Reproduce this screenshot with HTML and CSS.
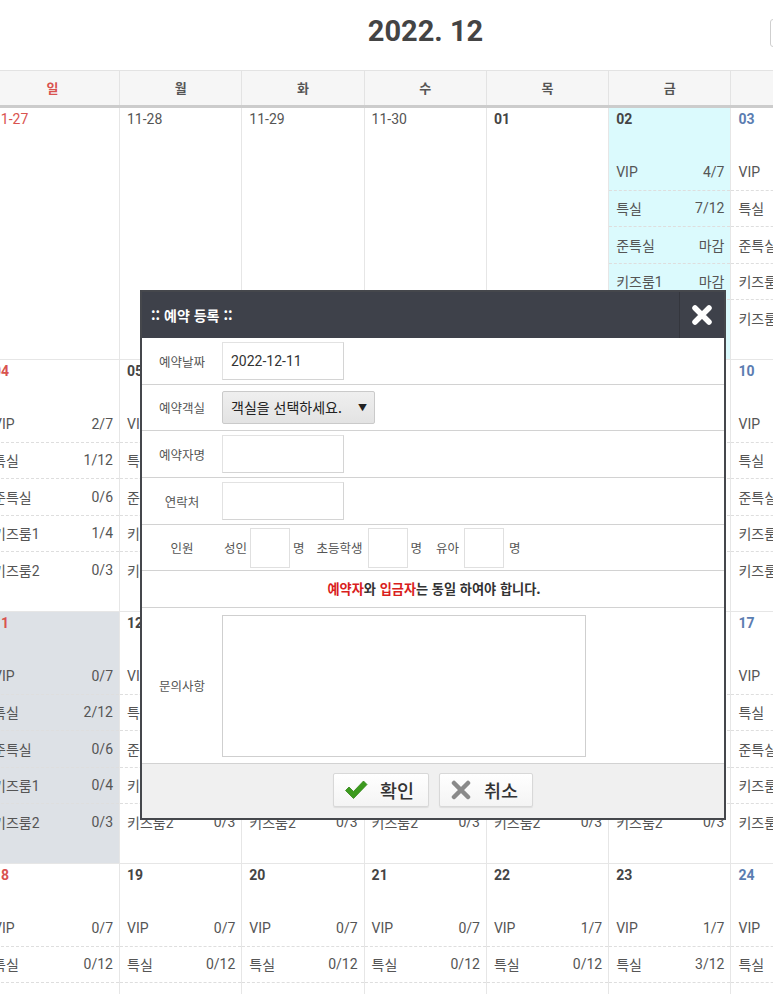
FILE: index.html
```html
<!DOCTYPE html>
<html lang="ko">
<head>
<meta charset="utf-8">
<title>2022. 12 예약</title>
<link rel="stylesheet" href="styles.css">
</head>
<body>
<div class="wrap">
  <div class="top">
    <div></div>
    <h1 class="title">2022. 12</h1>
    <div class="tools"><span class="tool-btn"></span></div>
  </div>
  <div class="week-head">
    <div class="wd sun">일</div><div class="wd">월</div><div class="wd">화</div><div class="wd">수</div><div class="wd">목</div><div class="wd">금</div><div class="wd"></div>
  </div>
  <div class="grid">
    <!-- week 1 -->
    <div class="cell sun"><div class="date prev">11-27</div></div>
    <div class="cell"><div class="date prev">11-28</div></div>
    <div class="cell"><div class="date prev">11-29</div></div>
    <div class="cell"><div class="date prev">11-30</div></div>
    <div class="cell"><div class="date">01</div></div>
    <div class="cell today"><div class="date">02</div>
      <ul class="rooms"><li><span>VIP</span><span>4/7</span></li><li><span>특실</span><span>7/12</span></li><li><span>준특실</span><span>마감</span></li><li><span>키즈룸1</span><span>마감</span></li><li><span>키즈룸2</span><span>마감</span></li></ul></div>
    <div class="cell sat"><div class="date">03</div>
      <ul class="rooms"><li><span>VIP</span><span>5/7</span></li><li><span>특실</span><span>9/12</span></li><li><span>준특실</span><span>마감</span></li><li><span>키즈룸1</span><span>마감</span></li><li><span>키즈룸2</span><span>마감</span></li></ul></div>
    <!-- week 2 -->
    <div class="cell sun"><div class="date">04</div>
      <ul class="rooms"><li><span>VIP</span><span>2/7</span></li><li><span>특실</span><span>1/12</span></li><li><span>준특실</span><span>0/6</span></li><li><span>키즈룸1</span><span>1/4</span></li><li><span>키즈룸2</span><span>0/3</span></li></ul></div>
    <div class="cell"><div class="date">05</div>
      <ul class="rooms"><li><span>VIP</span><span>0/7</span></li><li><span>특실</span><span>0/12</span></li><li><span>준특실</span><span>0/6</span></li><li><span>키즈룸1</span><span>0/4</span></li><li><span>키즈룸2</span><span>0/3</span></li></ul></div>
    <div class="cell"><div class="date">06</div>
      <ul class="rooms"><li><span>VIP</span><span>0/7</span></li><li><span>특실</span><span>0/12</span></li><li><span>준특실</span><span>0/6</span></li><li><span>키즈룸1</span><span>0/4</span></li><li><span>키즈룸2</span><span>0/3</span></li></ul></div>
    <div class="cell"><div class="date">07</div>
      <ul class="rooms"><li><span>VIP</span><span>0/7</span></li><li><span>특실</span><span>0/12</span></li><li><span>준특실</span><span>0/6</span></li><li><span>키즈룸1</span><span>0/4</span></li><li><span>키즈룸2</span><span>0/3</span></li></ul></div>
    <div class="cell"><div class="date">08</div>
      <ul class="rooms"><li><span>VIP</span><span>0/7</span></li><li><span>특실</span><span>0/12</span></li><li><span>준특실</span><span>0/6</span></li><li><span>키즈룸1</span><span>0/4</span></li><li><span>키즈룸2</span><span>0/3</span></li></ul></div>
    <div class="cell"><div class="date">09</div>
      <ul class="rooms"><li><span>VIP</span><span>1/7</span></li><li><span>특실</span><span>2/12</span></li><li><span>준특실</span><span>0/6</span></li><li><span>키즈룸1</span><span>0/4</span></li><li><span>키즈룸2</span><span>0/3</span></li></ul></div>
    <div class="cell sat"><div class="date">10</div>
      <ul class="rooms"><li><span>VIP</span><span>2/7</span></li><li><span>특실</span><span>3/12</span></li><li><span>준특실</span><span>1/6</span></li><li><span>키즈룸1</span><span>1/4</span></li><li><span>키즈룸2</span><span>1/3</span></li></ul></div>
    <!-- week 3 -->
    <div class="cell sun sel"><div class="date">11</div>
      <ul class="rooms"><li><span>VIP</span><span>0/7</span></li><li><span>특실</span><span>2/12</span></li><li><span>준특실</span><span>0/6</span></li><li><span>키즈룸1</span><span>0/4</span></li><li><span>키즈룸2</span><span>0/3</span></li></ul></div>
    <div class="cell"><div class="date">12</div>
      <ul class="rooms"><li><span>VIP</span><span>0/7</span></li><li><span>특실</span><span>0/12</span></li><li><span>준특실</span><span>0/6</span></li><li><span>키즈룸1</span><span>0/4</span></li><li><span>키즈룸2</span><span>0/3</span></li></ul></div>
    <div class="cell"><div class="date">13</div>
      <ul class="rooms"><li><span>VIP</span><span>0/7</span></li><li><span>특실</span><span>0/12</span></li><li><span>준특실</span><span>0/6</span></li><li><span>키즈룸1</span><span>0/4</span></li><li><span>키즈룸2</span><span>0/3</span></li></ul></div>
    <div class="cell"><div class="date">14</div>
      <ul class="rooms"><li><span>VIP</span><span>0/7</span></li><li><span>특실</span><span>0/12</span></li><li><span>준특실</span><span>0/6</span></li><li><span>키즈룸1</span><span>0/4</span></li><li><span>키즈룸2</span><span>0/3</span></li></ul></div>
    <div class="cell"><div class="date">15</div>
      <ul class="rooms"><li><span>VIP</span><span>0/7</span></li><li><span>특실</span><span>0/12</span></li><li><span>준특실</span><span>0/6</span></li><li><span>키즈룸1</span><span>0/4</span></li><li><span>키즈룸2</span><span>0/3</span></li></ul></div>
    <div class="cell"><div class="date">16</div>
      <ul class="rooms"><li><span>VIP</span><span>0/7</span></li><li><span>특실</span><span>1/12</span></li><li><span>준특실</span><span>0/6</span></li><li><span>키즈룸1</span><span>0/4</span></li><li><span>키즈룸2</span><span>0/3</span></li></ul></div>
    <div class="cell sat"><div class="date">17</div>
      <ul class="rooms"><li><span>VIP</span><span>1/7</span></li><li><span>특실</span><span>2/12</span></li><li><span>준특실</span><span>0/6</span></li><li><span>키즈룸1</span><span>0/4</span></li><li><span>키즈룸2</span><span>0/3</span></li></ul></div>
    <!-- week 4 -->
    <div class="cell sun"><div class="date">18</div>
      <ul class="rooms"><li><span>VIP</span><span>0/7</span></li><li><span>특실</span><span>0/12</span></li><li><span>준특실</span><span>0/6</span></li><li><span>키즈룸1</span><span>0/4</span></li><li><span>키즈룸2</span><span>0/3</span></li></ul></div>
    <div class="cell"><div class="date">19</div>
      <ul class="rooms"><li><span>VIP</span><span>0/7</span></li><li><span>특실</span><span>0/12</span></li><li><span>준특실</span><span>0/6</span></li><li><span>키즈룸1</span><span>0/4</span></li><li><span>키즈룸2</span><span>0/3</span></li></ul></div>
    <div class="cell"><div class="date">20</div>
      <ul class="rooms"><li><span>VIP</span><span>0/7</span></li><li><span>특실</span><span>0/12</span></li><li><span>준특실</span><span>0/6</span></li><li><span>키즈룸1</span><span>0/4</span></li><li><span>키즈룸2</span><span>0/3</span></li></ul></div>
    <div class="cell"><div class="date">21</div>
      <ul class="rooms"><li><span>VIP</span><span>0/7</span></li><li><span>특실</span><span>0/12</span></li><li><span>준특실</span><span>0/6</span></li><li><span>키즈룸1</span><span>0/4</span></li><li><span>키즈룸2</span><span>0/3</span></li></ul></div>
    <div class="cell"><div class="date">22</div>
      <ul class="rooms"><li><span>VIP</span><span>1/7</span></li><li><span>특실</span><span>0/12</span></li><li><span>준특실</span><span>0/6</span></li><li><span>키즈룸1</span><span>0/4</span></li><li><span>키즈룸2</span><span>0/3</span></li></ul></div>
    <div class="cell"><div class="date">23</div>
      <ul class="rooms"><li><span>VIP</span><span>1/7</span></li><li><span>특실</span><span>3/12</span></li><li><span>준특실</span><span>0/6</span></li><li><span>키즈룸1</span><span>0/4</span></li><li><span>키즈룸2</span><span>0/3</span></li></ul></div>
    <div class="cell sat"><div class="date">24</div>
      <ul class="rooms"><li><span>VIP</span><span>2/7</span></li><li><span>특실</span><span>4/12</span></li><li><span>준특실</span><span>1/6</span></li><li><span>키즈룸1</span><span>0/4</span></li><li><span>키즈룸2</span><span>0/3</span></li></ul></div>
  </div>
</div>

<div class="modal">
  <div class="modal-head">
    <span class="modal-title">:: 예약 등록 ::</span>
    <span class="close">
      <svg width="22" height="22" viewBox="0 0 22 22"><path d="M4 4 L18 18 M18 4 L4 18" stroke="#fff" stroke-width="5.5" stroke-linecap="round"/></svg>
    </span>
  </div>
  <div class="frow r1"><label>예약날짜</label><div class="txt">2022-12-11</div></div>
  <div class="frow r2"><label>예약객실</label><div class="select">객실을 선택하세요.<span class="caret">▼</span></div></div>
  <div class="frow r3"><label>예약자명</label><div class="txt"></div></div>
  <div class="frow r4"><label>연락처</label><div class="txt"></div></div>
  <div class="frow r5"><label>인원</label>
    <div class="people">
      <span>성인</span><span class="num"></span><span class="unit">명</span>
      <span class="grp">초등학생</span><span class="num n2"></span><span class="unit">명</span>
      <span class="grp g2">유아</span><span class="num n2"></span><span class="unit u3">명</span>
    </div>
  </div>
  <div class="notice"><em>예약자</em>와 <em>입금자</em>는 동일 하여야 합니다.</div>
  <div class="frow r7"><label>문의사항</label><div class="area"></div></div>
  <div class="foot">
    <button class="btn">
      <svg width="24" height="20" viewBox="0 0 24 20"><path d="M1.5 10.5 L5 7 L9.5 11.5 L19.5 1 L23 4.5 L9.5 18.5 Z" fill="#3c9a1e" stroke="#2f8414" stroke-width="0.8" stroke-linejoin="round"/></svg>
      <span>확인</span>
    </button>
    <button class="btn">
      <svg width="22" height="20" viewBox="0 0 22 20"><path d="M4 3 L18 17 M18 3 L4 17" stroke="#8a8a8a" stroke-width="4.5" stroke-linecap="round"/></svg>
      <span>취소</span>
    </button>
  </div>
</div>
</body>
</html>
```
FILE: styles.css
```css
html, body {
  margin: 0;
  padding: 0;
}
body {
  position: relative;
  width: 773px;
  height: 994px;
  overflow: hidden;
  background: #fff;
  color: #555;
  font-family: Roboto, "Noto Sans CJK KR", sans-serif;
}
.wrap {
  margin-left: -14px;
  width: 868px;
}
.top {
  display: grid;
  grid-template-columns: 1fr auto 1fr;
  height: 70px;
  padding-left: 11px;
  box-sizing: border-box;
}
.title {
  margin: 13px 0 0;
  font-size: 29px;
  line-height: 36px;
  font-weight: 700;
  color: #444;
  font-family: Roboto, sans-serif;
}
.tools {
  display: flex;
  align-items: flex-start;
}
.tool-btn {
  display: block;
  margin: 19px 0 0 287px;
  width: 40px;
  height: 26px;
  border: 1px solid #cfcfcf;
  border-radius: 3px;
  background: #fff;
}
.week-head {
  display: grid;
  grid-template-columns: 134px repeat(6, 122.3px);
  height: 38px;
  box-sizing: border-box;
  border-top: 1px solid #e3e3e3;
  border-bottom: 3px solid #cccccc;
  background: #f6f6f6;
}
.wd {
  border-right: 1px solid #e3e3e3;
  text-align: center;
  line-height: 34px;
  font-size: 13px;
  font-weight: 700;
  color: #555;
  font-family: "Noto Sans CJK KR", sans-serif;
}
.wd.sun {
  color: #d9534f;
}
.grid {
  display: grid;
  grid-template-columns: 134px repeat(6, 122.3px);
  grid-auto-rows: 252px;
}
.cell {
  border-right: 1px solid #e6e6e6;
  border-bottom: 1px solid #e6e6e6;
  box-sizing: border-box;
}
.today {
  background: #dbfafd;
}
.sel {
  background: #dde1e6;
}
.date {
  line-height: 22px;
  padding: 0 7px;
  font-size: 14px;
  font-weight: 700;
  color: #444;
}
.date.prev {
  font-weight: 400;
  color: #555;
}
.sun .date {
  color: #d9534f;
}
.sat .date {
  color: #5b7db1;
}
.rooms {
  list-style: none;
  margin: 24px 0 0;
  padding: 0;
}
.rooms li {
  display: flex;
  justify-content: space-between;
  align-items: center;
  height: 36.5px;
  box-sizing: border-box;
  padding: 0 6px 0 7px;
  border-bottom: 1px dashed #dedede;
  font-size: 14px;
  color: #555;
  font-family: Roboto, "Noto Sans CJK KR", sans-serif;
}
.rooms li:last-child {
  border-bottom: 0;
}

/* modal */
.modal {
  position: absolute;
  left: 140px;
  top: 290px;
  width: 586px;
  height: 530px;
  box-sizing: border-box;
  border: 2px solid #45474c;
  background: #fff;
  display: flex;
  flex-direction: column;
  font-family: "Noto Sans CJK KR", Roboto, sans-serif;
}
.modal-head {
  height: 46px;
  flex: none;
  display: flex;
  justify-content: space-between;
  align-items: center;
  background: #3e414a;
}
.modal-title {
  padding-left: 9px;
  color: #fff;
  font-size: 14px;
  font-weight: 700;
}
.close {
  width: 44px;
  height: 46px;
  border-left: 1px solid #34363d;
  display: flex;
  align-items: center;
  justify-content: center;
}
.frow {
  display: grid;
  grid-template-columns: 80px 1fr;
  align-items: center;
  border-bottom: 1px solid #d2d2d2;
  box-sizing: border-box;
  flex: none;
}
.frow label {
  text-align: center;
  font-size: 12.5px;
  color: #555;
}
.r1 { height: 47px; }
.r2 { height: 46px; }
.r3 { height: 47px; }
.r4 { height: 47px; }
.r5 { height: 46px; }
.r7 { height: 156px; }
.txt {
  width: 122px;
  height: 38px;
  box-sizing: border-box;
  border: 1px solid #e2e2e2;
  border-right-color: #d4d4d4;
  border-bottom-color: #d4d4d4;
  padding: 0 8px;
  font-size: 14px;
  line-height: 36px;
  color: #333;
  font-family: Roboto, sans-serif;
}
.select {
  position: relative;
  width: 153px;
  height: 33px;
  box-sizing: border-box;
  border: 1px solid #cacaca;
  border-radius: 2px;
  background: linear-gradient(#efefef, #e3e3e3);
  padding-left: 8px;
  font-size: 14px;
  line-height: 31px;
  color: #222;
}
.caret {
  position: absolute;
  right: 7px;
  top: 0;
  font-size: 9px;
  color: #222;
}
.people {
  display: flex;
  align-items: center;
  font-size: 12.5px;
  color: #555;
  padding-left: 2px;
}
.num {
  width: 40px;
  height: 40px;
  box-sizing: border-box;
  border: 1px solid #e0e0e0;
  margin: 0 3px 0 3px;
}
.num.n2 {
  margin-left: 5px;
}
.grp {
  margin-left: 12px;
}
.grp.g2 {
  margin-left: 14px;
}
.unit.u3 {
  margin-left: 2px;
}
.notice {
  height: 37px;
  flex: none;
  box-sizing: border-box;
  border-bottom: 1px solid #d2d2d2;
  text-align: center;
  line-height: 36px;
  font-size: 13.2px;
  font-weight: 700;
  color: #333;
  padding-left: 2px;
}
.notice em {
  font-style: normal;
  color: #d9201c;
}
.area {
  width: 364px;
  height: 142px;
  box-sizing: border-box;
  border: 1px solid #cfcfcf;
}
.foot {
  flex: 1;
  display: flex;
  justify-content: center;
  align-items: center;
  gap: 10px;
  background: #f0f0f0;
  padding-bottom: 2px;
}
.btn {
  display: flex;
  align-items: center;
  gap: 12px;
  height: 34px;
  box-sizing: border-box;
  padding: 0 14px 0 10px;
  border: 1px solid #d8d8d8;
  border-radius: 2px;
  background: linear-gradient(#ffffff, #f4f4f4);
  box-shadow: 0 1px 1px rgba(0, 0, 0, 0.08);
  font-family: "Noto Sans CJK KR", sans-serif;
  font-size: 18.5px;
  font-weight: 500;
  color: #333;
}
```
